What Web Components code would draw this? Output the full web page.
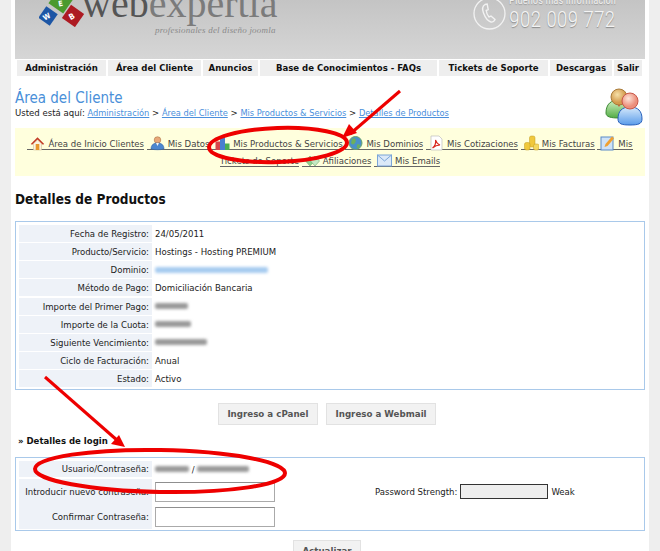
<!DOCTYPE html>
<html>
<head>
<meta charset="utf-8">
<title>Detalles de Productos</title>
<style>
  html, body { margin: 0; padding: 0; height: 551px; overflow: hidden; background: #eeeeee; }
  body { font-family: "DejaVu Sans Condensed", "DejaVu Sans", Verdana, sans-serif; font-stretch: condensed; color: #222; }
</style>
</head>
<body>
<site-page></site-page>
<script>
class SiteHeader extends HTMLElement {
  connectedCallback() {
    const shadow = this.attachShadow({ mode: "open" });
    shadow.innerHTML = `
      <style>
        :host{display:flex;justify-content:space-between;height:59px;background:linear-gradient(#c4c4c4,#d6d6d6);overflow:hidden;}
        .logo{display:flex;margin-left:24px;align-items:flex-start;}
        .brand{font-family:"Liberation Serif",serif;font-size:40px;line-height:40px;color:#555;margin:-16px 0 0 -3px;}
        .brand span{color:#7b7b7b;}
        .tag{font-family:"Liberation Serif",serif;font-style:italic;font-size:9px;line-height:11px;color:#8a8a8a;margin:1px 0 0 70px;letter-spacing:.2px;}
        .phone{display:flex;margin-right:29px;color:#f4f4f4;font-family:Roboto,sans-serif;margin-top:-3px;}
        .phone svg{flex:none;}
        .ask{font-size:10.600px;line-height:12px;color:#eee;margin:-2px 0 0 3px;text-shadow:0 1px 1px #999;white-space:nowrap;}
        .num{font-weight:300;font-size:22px;line-height:24px;margin:1px 0 0 3px;text-shadow:0 1px 1px #888;white-space:nowrap;}
      </style>
      <div class="logo">
        <svg width="46" height="27" viewBox="0 0 46 27" style="flex:none">
          <rect x="-9" y="-9" width="18" height="18" transform="translate(22 1) rotate(35)" fill="#4b9a2e"/>
          <rect x="-7" y="-7" width="14" height="14" transform="translate(9 16) rotate(35)" fill="#1d56a5"/>
          <rect x="-8" y="-8" width="16" height="16" transform="translate(34 16) rotate(35)" fill="#ad1a22"/>
          <text font-size="7.500" font-weight="700" font-family="DejaVu Sans" fill="#fff" text-anchor="middle" transform="translate(9 19) rotate(-30)">W</text>
          <text font-size="7.500" font-weight="700" font-family="DejaVu Sans" fill="#fff" text-anchor="middle" transform="translate(22 6) rotate(-10)">E</text>
          <text font-size="8" font-weight="700" font-family="DejaVu Sans" fill="#fff" text-anchor="middle" transform="translate(34 19) rotate(-30)">B</text>
        </svg>
        <div>
          <div class="brand">web<span>expertia</span></div>
          <div class="tag">profesionales del diseño joomla</div>
        </div>
      </div>
      <div class="phone">
        <svg width="33" height="33" viewBox="0 0 33 33"><circle cx="16.500" cy="16.500" r="15.500" fill="none" stroke="#f2f2f2" stroke-width="1.300"/><path d="M12 7.500c-2.500 1.500-3 4.500-1.500 8.500s4 8 7.500 9c1.500.5 3.500-1 4-2.500l-4-3.500-2 1c-1.500-1.500-2.500-4-2.800-6.500l2-1-1-5.500z" fill="none" stroke="#f2f2f2" stroke-width="1.400"/></svg>
        <div>
          <div class="ask">Pídenos más información</div>
          <div class="num">902 009 772</div>
        </div>
      </div>`;
  }
}

class MainNav extends HTMLElement {
  connectedCallback() {
    const shadow = this.attachShadow({ mode: "open" });
    const items = [
      ["Administración", 89], ["Área del Cliente", 93], ["Anuncios", 55], ["Base de Conocimientos - FAQs", 177],
      ["Tickets de Soporte", 109], ["Descargas", 62], ["Salir", 28],
    ];
    shadow.innerHTML = `
      <style>
        :host{display:flex;gap:2px;margin:1px 0 0 2px;height:16px;}
        div{background:#eeeeee;color:#111;font-weight:700;font-size:9.500px;line-height:16px;text-align:center;white-space:nowrap;overflow:hidden;}
      </style>`;
    items.forEach(([label, width]) => {
      const div = document.createElement("div");
      div.textContent = label;
      div.style.width = width + "px";
      shadow.append(div);
    });
  }
}

class Breadcrumb extends HTMLElement {
  connectedCallback() {
    const shadow = this.attachShadow({ mode: "open" });
    shadow.innerHTML = `
      <style>
        :host{display:flex;justify-content:space-between;height:52px;}
        .text{padding-top:13px;}
        h1{margin:0;font-weight:400;font-size:15px;line-height:18px;color:#4a90d9;}
        p{margin:-1px 0 0;font-size:9.500px;line-height:13px;color:#222;}
        a{color:#4a8fdc;text-decoration:underline;font-size:9.200px;}
        svg{margin:12px 1px 0 0;}
      </style>
      <div class="text">
        <h1>Área del Cliente</h1>
        <p>Usted está aquí: <a>Administración</a> &gt; <a>Área del Cliente</a> &gt; <a>Mis Productos &amp; Servicios</a> &gt; <a>Detalles de Productos</a></p>
      </div>
      <svg width="39" height="38" viewBox="0 0 39 38">
        <defs>
          <radialGradient id="a" cx=".4" cy=".35"><stop offset="0" stop-color="#f6e0a8"/><stop offset="1" stop-color="#d39a4c"/></radialGradient>
          <radialGradient id="b" cx=".4" cy=".35"><stop offset="0" stop-color="#fde4d8"/><stop offset="1" stop-color="#ec8f7c"/></radialGradient>
          <linearGradient id="c" x2="0" y2="1"><stop offset="0" stop-color="#d4f0c4"/><stop offset="1" stop-color="#52ad45"/></linearGradient>
          <linearGradient id="d" x2="0" y2="1"><stop offset="0" stop-color="#d6e9fb"/><stop offset="1" stop-color="#5a9cea"/></linearGradient>
        </defs>
        <path d="M1 25c0-9 5-13 13-13s13 4 13 13c0 4-5 5-13 5s-13-1-13-5z" fill="url(#c)" stroke="#3c8a34"/>
        <path d="M12 15h4l-2 4z" fill="#d8302a"/>
        <circle cx="14" cy="9" r="8" fill="url(#a)" stroke="#a87a3a"/>
        <path d="M13 31c0-8 4-12 12-12s12 4 12 12c0 5-4 6-12 6s-12-1-12-6z" fill="url(#d)" stroke="#2a62bc"/>
        <circle cx="25" cy="13" r="8" fill="url(#b)" stroke="#c8584a"/>
      </svg>`;
  }
}

const ICONS = {
  house: `<path d="M3.500 8.500 7.500 5l4 3.500V15h-8z" fill="#fbf3e2" stroke="#c9b48c" stroke-width=".5"/><path d="M.8 9 7.500 2.200 14.200 9l-1.300.8L7.500 4.500 2.100 9.800z" fill="#c23a26"/><rect x="5.700" y="9" width="3.600" height="6" fill="#e8962c"/>`,
  user: `<circle cx="7.500" cy="5" r="3.300" fill="#e8a878" stroke="#a0663a" stroke-width=".5"/><path d="M1 14c0-4.500 3-6 6.500-6s6.500 1.500 6.500 6c-3 1-10 1-13 0z" fill="#4c86d0" stroke="#2a5a9a" stroke-width=".5"/><path d="M6 8h3l-1.500 3z" fill="#f4f4f4"/>`,
  chart: `<rect x=".5" y="6.500" width="4.500" height="8.500" fill="#d8464a"/><rect x="5" y="1" width="5" height="14" fill="#4a7fd0"/><rect x="10" y="8.500" width="4.500" height="6.500" fill="#4caf50"/>`,
  globe: `<circle cx="7.500" cy="8" r="6.500" fill="#4a90c8" stroke="#6aa36a"/><path d="M4 4c3-2 4.500 0 3.500 3s-3.500 3-4.500 1zM9.500 9l3 1-2 3.500-2-1z" fill="#6cb05c"/>`,
  pdf: `<path d="M2 1h8l3 3v11H2z" fill="#fff" stroke="#bbb" stroke-width=".7"/><path d="M3.500 13c2.500-2 3.500-5 3-8 .8 2.500 2.300 4.200 4.500 5-2.700 0-5.200 1-7.500 3z" fill="none" stroke="#d8281e" stroke-width="1.100"/>`,
  coins: `<rect x="5.500" y="1" width="5.500" height="11" rx="1.800" fill="#f0c83c" stroke="#c09a20" stroke-width=".5"/><rect x=".5" y="7.500" width="5.500" height="7.500" rx="1.800" fill="#f0c83c" stroke="#c09a20" stroke-width=".5"/><rect x="9.500" y="9" width="5.500" height="6" rx="1.800" fill="#f4d860" stroke="#c09a20" stroke-width=".5"/>`,
  edit: `<rect x="1" y="2" width="12" height="13" fill="#cfe2f6" stroke="#5a8ac8"/><path d="M4.500 12l1-3 6.500-7.500 2 2-6.500 7.500z" fill="#f0a030"/>`,
  link: `<path d="M.5 9l4.500-5 4.500 5-4.500 5z" fill="#8fcf8f" stroke="#5a9a5a" stroke-width=".5"/><path d="M5.500 9l4.500-5 4.500 5-4.500 5z" fill="#c4e8c4" stroke="#5a9a5a" stroke-width=".5"/>`,
  mail: `<rect x=".5" y="3" width="14" height="11" fill="#dbe9f8" stroke="#7aa5d8"/><path d="M.5 3l7 6 7-6" fill="none" stroke="#7aa5d8"/>`,
};

class QuickLink extends HTMLElement {
  connectedCallback() {
    const shadow = this.attachShadow({ mode: "open" });
    shadow.innerHTML = `
      <style>
        :host{display:inline;color:#444;border-bottom:1px solid #666;padding-left:3px;}
        svg{vertical-align:-4px;margin:0 3px 0 0;}
      </style>
      <svg width="15" height="16" viewBox="0 0 15 16">${ICONS[this.getAttribute("icon")]}</svg><slot></slot>`;
  }
}

class QuickMenu extends HTMLElement {
  connectedCallback() {
    const shadow = this.attachShadow({ mode: "open" });
    shadow.innerHTML = `
      <style>
        :host{display:block;height:48px;box-sizing:border-box;background:#ffffdd;padding:7px 10px 0;font-size:9.500px;line-height:16px;text-align:center;}
      </style>
      <slot></slot>`;
  }
}

class InfoRow extends HTMLElement {
  connectedCallback() {
    const shadow = this.attachShadow({ mode: "open" });
    shadow.innerHTML = `
      <style>
        :host{display:grid;grid-template-columns:133px 1fr;gap:3px;height:var(--row-height,16px);font-size:9.500px;color:#222;}
        .label{background:#eef2f8;text-align:right;padding-right:3px;line-height:var(--label-line,16px);white-space:nowrap;}
        .value{display:flex;align-items:center;white-space:nowrap;}
      </style>
      <div class="label">${this.getAttribute("label")}</div>
      <div class="value"><slot></slot></div>`;
  }
}

class InfoBox extends HTMLElement {
  connectedCallback() {
    const shadow = this.attachShadow({ mode: "open" });
    shadow.innerHTML = `
      <style>
        :host{display:flex;flex-direction:column;gap:var(--row-gap,2px);box-sizing:border-box;border:1px solid #a9c9ea;padding:3px;}
      </style>
      <slot></slot>`;
  }
}

class BlurBit extends HTMLElement {
  connectedCallback() {
    const shadow = this.attachShadow({ mode: "open" });
    const width = this.getAttribute("width");
    const tone = this.getAttribute("tone") || "#999";
    shadow.innerHTML = `
      <style>
        :host{display:inline-block;width:${width}px;height:6px;background:${tone};filter:blur(1.500px);border-radius:2px;}
      </style>`;
  }
}

class ActionButton extends HTMLElement {
  connectedCallback() {
    const shadow = this.attachShadow({ mode: "open" });
    shadow.innerHTML = `
      <style>
        :host{display:inline-block;box-sizing:border-box;height:22px;padding:0 8.500px;background:#f2f2f2;border:1px solid #e2e2e2;color:#555;font-family:"DejaVu Sans",sans-serif;font-stretch:normal;font-weight:700;font-size:8.700px;line-height:20px;white-space:nowrap;}
      </style>
      <slot></slot>`;
  }
}

class TextField extends HTMLElement {
  connectedCallback() {
    const shadow = this.attachShadow({ mode: "open" });
    shadow.innerHTML = `
      <style>
        :host{display:block;box-sizing:border-box;width:120px;height:20px;background:#fff;border:1px solid #aaa;border-top-color:#8f8f8f;}
      </style>`;
  }
}

class SitePage extends HTMLElement {
  connectedCallback() {
    const shadow = this.attachShadow({ mode: "open" });
    shadow.innerHTML = `
      <style>
        :host{display:block;box-sizing:border-box;width:638px;height:551px;margin-left:11px;padding:0 4px;background:#fff;position:relative;overflow:hidden;font-size:9.500px;}
        h2{margin:15px 0 14px;font-size:13.500px;line-height:16px;color:#111;}
        h3{margin:10px 0 10px 3px;font-size:9.500px;line-height:12px;color:#111;}
        .details{--row-gap:2.125px;--label-line:17px;}
        .actions{display:flex;justify-content:center;gap:8px;margin:13px 6px 0 0;}
        .strength{display:flex;align-items:center;gap:3px;margin-left:100px;}
        .meter{width:88px;height:15px;box-sizing:border-box;background:#eee;border:1px solid #333;}
        .marks{position:absolute;left:-11px;top:0;pointer-events:none;}
        info-row.tall{--row-height:23px;--label-line:25px;}
        info-row.field{--row-height:23px;--label-line:25px;}
        .last{margin:9px 6px 0 0;}
      </style>
      <site-header></site-header>
      <main-nav></main-nav>
      <bread-crumb></bread-crumb>
      <quick-menu>
        <quick-link icon="house">Área de Inicio Clientes</quick-link>
        <quick-link icon="user">Mis Datos</quick-link>
        <quick-link icon="chart">Mis Productos &amp; Servicios</quick-link>
        <quick-link icon="globe">Mis Dominios</quick-link>
        <quick-link icon="pdf">Mis Cotizaciones</quick-link>
        <quick-link icon="coins">Mis Facturas</quick-link>
        <quick-link icon="edit">Mis Tickets de Soporte</quick-link>
        <quick-link icon="link">Afiliaciones</quick-link>
        <quick-link icon="mail">Mis Emails</quick-link>
      </quick-menu>
      <h2>Detalles de Productos</h2>
      <info-box class="details">
        <info-row label="Fecha de Registro:">24/05/2011</info-row>
        <info-row label="Producto/Servicio:">Hostings - Hosting PREMIUM</info-row>
        <info-row label="Dominio:"><blur-bit width="113" tone="#a6cbf0"></blur-bit></info-row>
        <info-row label="Método de Pago:">Domiciliación Bancaria</info-row>
        <info-row label="Importe del Primer Pago:"><blur-bit width="33"></blur-bit></info-row>
        <info-row label="Importe de la Cuota:"><blur-bit width="36"></blur-bit></info-row>
        <info-row label="Siguiente Vencimiento:"><blur-bit width="52"></blur-bit></info-row>
        <info-row label="Ciclo de Facturación:">Anual</info-row>
        <info-row label="Estado:">Activo</info-row>
      </info-box>
      <div class="actions">
        <action-button>Ingreso a cPanel</action-button>
        <action-button>Ingreso a Webmail</action-button>
      </div>
      <h3>» Detalles de login</h3>
      <info-box>
        <info-row label="Usuario/Contraseña:"><blur-bit width="34"></blur-bit>&nbsp;/&nbsp;<blur-bit width="52"></blur-bit></info-row>
        <info-row class="tall" label="Introducir nuevo contraseña:">
          <text-field></text-field>
          <span class="strength">Password Strength: <span class="meter"></span> Weak</span>
        </info-row>
        <info-row class="field" label="Confirmar Contraseña:"><text-field></text-field></info-row>
      </info-box>
      <div class="actions last"><action-button>Actualizar</action-button></div>
      <svg class="marks" width="660" height="551" viewBox="0 0 660 551">
        <g fill="none" stroke="#ee0000" stroke-width="4">
          <ellipse cx="278" cy="145" rx="69" ry="17" transform="rotate(-2 278 145)"/>
          <ellipse cx="160" cy="471" rx="125" ry="21" transform="rotate(1 160 471)"/>
          <path d="M400 91 350 134" stroke-width="3"/>
          <path d="M45 377 118 441" stroke-width="3"/>
        </g>
        <path d="M342 138l15-5-8-9z" fill="#ee0000"/>
        <path d="M125 447l-14-3 8-9z" fill="#ee0000"/>
      </svg>`;
  }
}

customElements.define("site-header", SiteHeader);
customElements.define("main-nav", MainNav);
customElements.define("bread-crumb", Breadcrumb);
customElements.define("quick-link", QuickLink);
customElements.define("quick-menu", QuickMenu);
customElements.define("info-row", InfoRow);
customElements.define("info-box", InfoBox);
customElements.define("blur-bit", BlurBit);
customElements.define("action-button", ActionButton);
customElements.define("text-field", TextField);
customElements.define("site-page", SitePage);
</script>
</body>
</html>
